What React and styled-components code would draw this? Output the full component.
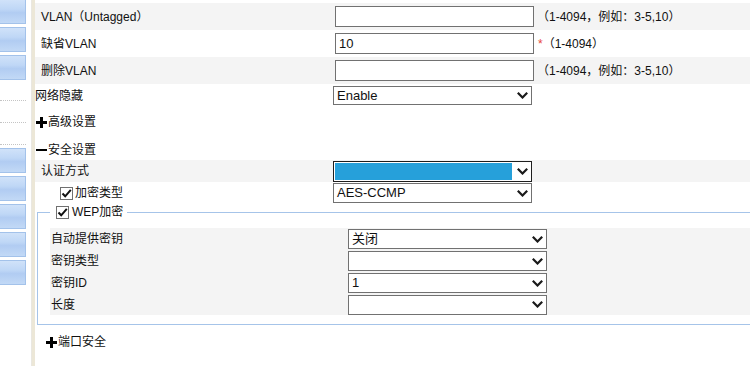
import React from 'react';
import styled, { createGlobalStyle } from 'styled-components';

const Global = createGlobalStyle`
  html, body { margin: 0; padding: 0; background: #fff; }
  body {
    width: 750px; height: 366px; overflow: hidden;
    font-family: "Liberation Sans", "Noto Sans CJK SC", sans-serif;
    font-size: 12px; color: #111;
    text-spacing-trim: space-all;
  }
  * { box-sizing: border-box; }
`;

const Page = styled.div`
  display: flex;
  width: 750px;
  height: 366px;
  overflow: hidden;
`;

const Sidebar = styled.div`
  width: 26px;
  flex: none;
  display: flex;
  flex-direction: column;
  margin-top: -1px;
`;

const NavButton = styled.div`
  height: 25px;
  flex: none;
  margin-bottom: 3px;
  border: 1px solid #a3c2ea;
  border-left: none;
  background: linear-gradient(to bottom, #d0e2f9 0%, #bfd7f6 40%, #b1ccf2 55%, #c2d9f6 100%);
`;

const DotList = styled.div`
  display: flex;
  flex-direction: column;
  padding-bottom: 3px;
  margin-top: -3px;
`;

const DotSep = styled.div`
  flex: none;
  height: 0;
  margin-top: 21px;
  border-top: 1px dotted #c4c4c4;
  &:first-child { margin-top: 20px; }
`;

const Stripe = styled.div`
  flex: none;
  width: 4px;
  margin-left: 5px;
  border-left: 1px solid #e9e7e1;
  background: #ece7d7;
`;

const Content = styled.div`
  flex: none;
  width: 730px;
  padding-top: 3px;
  display: flex;
  flex-direction: column;
`;

const FieldRow = styled.div`
  display: grid;
  grid-template-columns: ${p => p.$col || 300}px 199px auto;
  align-items: center;
  height: ${p => p.$h || 27}px;
  margin-top: ${p => p.$mt || 0}px;
  background: ${p => (p.$shaded ? '#f4f4f4' : 'transparent')};
`;

const Label = styled.div`
  padding-left: ${p => (p.$indent ?? 6)}px;
  display: flex;
  align-items: center;
  gap: 2px;
  white-space: nowrap;
  line-height: 16px;
`;

const TextInput = styled.div`
  width: 199px;
  height: 21px;
  border: 1px solid #717171;
  background: #fff;
  font-size: 13px;
  line-height: 19px;
  padding-left: 3px;
`;

const Hint = styled.div`
  padding-left: 3px;
  white-space: nowrap;
  line-height: 16px;
`;

const Req = styled.span`
  color: #e8463a;
  margin-left: 1px;
  margin-right: 0;
`;

const SelectBox = styled.div`
  width: 199px;
  height: ${p => p.$h || 20}px;
  border: 1px solid ${p => (p.$focus ? '#1e1e1e' : '#717171')};
  background: #fff;
  display: flex;
  align-items: center;
  padding: ${p => (p.$focus ? '1px 3px 1px 1px' : '0 3px 0 3px')};
  font-size: 13px;
  line-height: 16px;
`;

const SelectValue = styled.div`
  flex: 1;
  min-width: 0;
  height: 100%;
  display: flex;
  align-items: center;
  background: ${p => (p.$highlight ? '#26a0da' : 'transparent')};
  margin-right: ${p => (p.$highlight ? 5 : 0)}px;
  white-space: nowrap;
`;

const Chevron = () => (
  <svg width="11" height="7" viewBox="0 0 11 7" style={{ flex: 'none' }}>
    <path d="M0.8 0.8 L5.5 5.5 L10.2 0.8" fill="none" stroke="#1a1a1a" strokeWidth="2.2" />
  </svg>
);

const Select = ({ value, focus, h }) => (
  <SelectBox $focus={focus} $h={h}>
    <SelectValue $highlight={focus}>{value}</SelectValue>
    <Chevron />
  </SelectBox>
);

const Toggle = styled.div`
  display: flex;
  align-items: center;
  gap: 1px;
  height: 16px;
  line-height: 16px;
  margin-top: ${p => p.$mt || 0}px;
  margin-left: ${p => p.$ml || 1}px;
  white-space: nowrap;
`;

const PlusIcon = () => (
  <svg width="11" height="11" viewBox="0 0 11 11" style={{ flex: 'none' }}>
    <rect x="0" y="4" width="11" height="3" fill="#000" />
    <rect x="4" y="0" width="3" height="11" fill="#000" />
  </svg>
);

const MinusIcon = () => (
  <svg width="11" height="11" viewBox="0 0 11 11" style={{ flex: 'none' }}>
    <rect x="0" y="4" width="11" height="2" fill="#000" />
  </svg>
);

const CheckBox = styled.span`
  flex: none;
  width: 13px;
  height: 13px;
  border: 1px solid #707070;
  background: #fff;
  display: inline-flex;
  align-items: center;
  justify-content: center;
`;

const Check = () => (
  <CheckBox>
    <svg width="11" height="11" viewBox="0 0 11 11">
      <path d="M1.5 5.5 L4.2 8.3 L9.8 1.8" fill="none" stroke="#111" strokeWidth="2" />
    </svg>
  </CheckBox>
);

const Group = styled.fieldset`
  margin: 1px 0 0 2px;
  padding: 9px 0 9px 12px;
  border: none;
  border-top: 1px solid #a6c4e9;
  border-left: 1px solid #a6c4e9;
  border-bottom: 1px solid #a6c4e9;
  min-width: 0;
`;

const Legend = styled.legend`
  padding: 0 4px 0 6px;
  display: flex;
  align-items: center;
  gap: 3px;
  height: 14px;
  line-height: 14px;
`;

const InnerBlock = styled.div`
  background: #f4f4f4;
  display: flex;
  flex-direction: column;
`;

export default function App() {
  return (
    <>
      <Global />
      <Page>
        <Sidebar>
          <NavButton />
          <NavButton />
          <NavButton />
          <DotList>
            <DotSep />
            <DotSep />
            <DotSep />
          </DotList>
          <NavButton />
          <NavButton />
          <NavButton />
          <NavButton />
          <NavButton />
        </Sidebar>
        <Stripe />
        <Content>
          <FieldRow $shaded>
            <Label>VLAN（Untagged）</Label>
            <TextInput />
            <Hint>（1-4094，例如：3-5,10）</Hint>
          </FieldRow>
          <FieldRow>
            <Label>缺省VLAN</Label>
            <TextInput>10</TextInput>
            <Hint><Req>*</Req>（1-4094）</Hint>
          </FieldRow>
          <FieldRow $shaded>
            <Label>删除VLAN</Label>
            <TextInput />
            <Hint>（1-4094，例如：3-5,10）</Hint>
          </FieldRow>
          <FieldRow $col={298} $h={23}>
            <Label $indent={0}>网络隐藏</Label>
            <Select value="Enable" h={19} />
          </FieldRow>
          <Toggle $mt={7}><PlusIcon />高级设置</Toggle>
          <Toggle $mt={12}><MinusIcon />安全设置</Toggle>
          <FieldRow $col={298} $h={22} $mt={2} $shaded>
            <Label>认证方式</Label>
            <Select value="" focus h={21} />
          </FieldRow>
          <FieldRow $col={298} $h={22}>
            <Label $indent={25}><Check />加密类型</Label>
            <Select value="AES-CCMP" />
          </FieldRow>
          <Group>
            <Legend><Check />WEP加密</Legend>
            <InnerBlock>
              <FieldRow $col={298} $h={22}>
                <Label $indent={1}>自动提供密钥</Label>
                <Select value="关闭" />
              </FieldRow>
              <FieldRow $col={298} $h={22}>
                <Label $indent={1}>密钥类型</Label>
                <Select value="" />
              </FieldRow>
              <FieldRow $col={298} $h={22}>
                <Label $indent={1}>密钥ID</Label>
                <Select value="1" />
              </FieldRow>
              <FieldRow $col={298} $h={21}>
                <Label $indent={1}>长度</Label>
                <Select value="" />
              </FieldRow>
            </InnerBlock>
          </Group>
          <Toggle $mt={9} $ml={11}><PlusIcon />端口安全</Toggle>
        </Content>
      </Page>
    </>
  );
}
